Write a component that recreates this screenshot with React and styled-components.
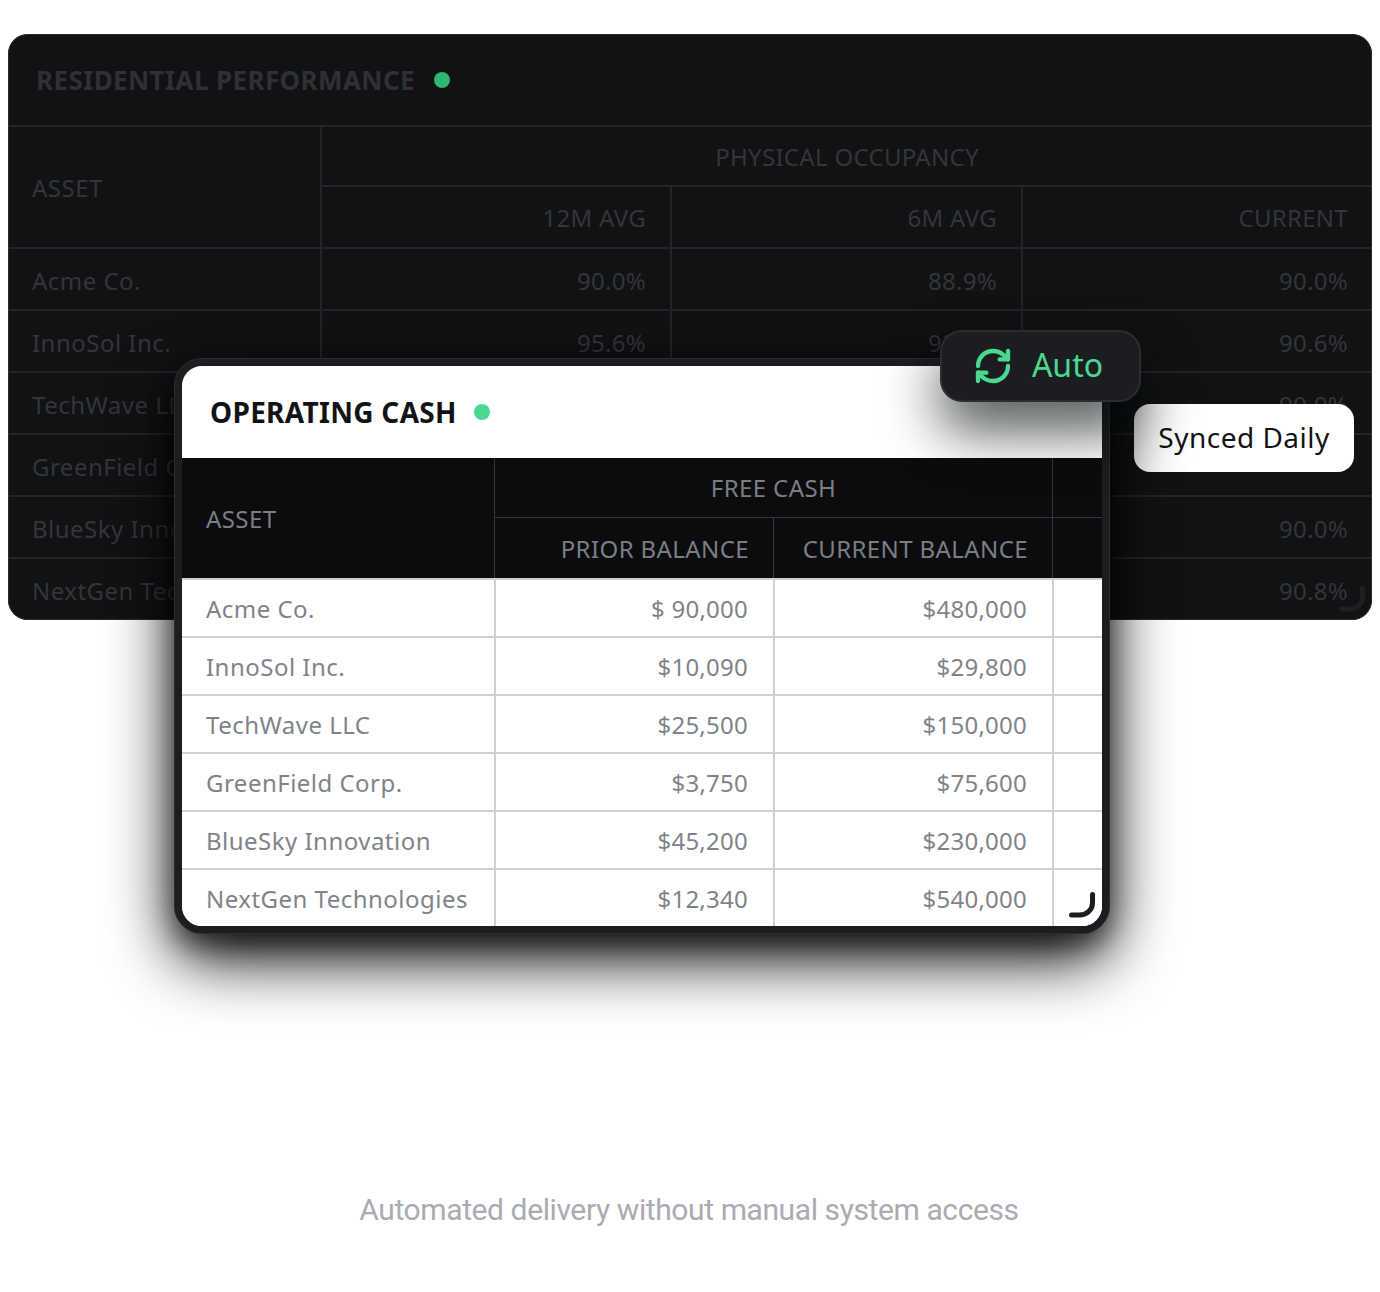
import React from "react";
import styled, { createGlobalStyle } from "styled-components";
import { RefreshCw } from "lucide-react";

const GlobalStyle = createGlobalStyle`
  body {
    margin: 0;
    background: #fff;
    font-family: "Noto Sans", sans-serif;
    letter-spacing: 0.48px;
  }
`;

const Stage = styled.div`
  position: relative;
  width: 1380px;
  height: 1292px;
  box-sizing: border-box;
  padding: 34px 8px 0;
  overflow: hidden;
`;

const BackCard = styled.section`
  width: 1364px;
  height: 586px;
  background: #111214;
  border-radius: 20px;
  outline: 1px solid #2a2b30;
  outline-offset: -1px;
  overflow: hidden;
  position: relative;
`;

const CardHeader = styled.div`
  height: ${(p) => p.$height}px;
  display: flex;
  align-items: center;
  gap: ${(p) => p.$gap}px;
  padding-left: ${(p) => p.$inset}px;
  box-sizing: border-box;
`;

const BackTitle = styled.h2`
  margin: 0;
  font-size: 26px;
  font-weight: 700;
  letter-spacing: 0.4px;
  color: #2f3035;
`;

const FrontTitle = styled.h2`
  margin: 0;
  font-size: 28px;
  font-weight: 700;
  letter-spacing: 0.3px;
  color: #121316;
`;

const Dot = styled.span`
  width: 16px;
  height: 16px;
  border-radius: 50%;
  background: ${(p) => p.$color};
`;

const Table = styled.table`
  table-layout: fixed;
  width: ${(p) => p.$width}px;
  border-collapse: separate;
  border-spacing: 0;
`;

const BackCell = styled.td`
  box-sizing: border-box;
  height: ${(p) => p.$height || 62}px;
  padding: ${(p) => (p.as === "th" ? "0 24px" : "2px 24px 0")};
  border-top: 2px solid #232428;
  border-left: ${(p) => (p.$first ? "none" : "2px solid #232428")};
  font-size: 24px;
  font-weight: 400;
  letter-spacing: ${(p) => (p.$align === "left" ? "0.48px" : "0.3px")};
  color: #33353a;
  text-align: ${(p) => p.$align || "right"};
`;

const FrontHeadCell = styled.th`
  box-sizing: border-box;
  height: ${(p) => p.$height}px;
  padding: 0 24px;
  background: #0b0c0e;
  border-top: ${(p) => (p.$top ? "1px solid #34363b" : "none")};
  border-left: ${(p) => (p.$first ? "none" : "1px solid #34363b")};
  font-size: 24px;
  font-weight: 400;
  letter-spacing: 0.4px;
  color: #7b7f85;
  text-align: ${(p) => p.$align || "right"};
`;

const FrontCell = styled.td`
  box-sizing: border-box;
  height: 58px;
  padding: 0 25px 0 24px;
  background: #fff;
  border-top: 2px solid #cfd1d4;
  border-left: ${(p) => (p.$first ? "none" : "2px solid #cfd1d4")};
  font-size: 24px;
  letter-spacing: ${(p) => (p.$align === "left" ? "0.48px" : "0.25px")};
  color: #7f8389;
  text-align: ${(p) => p.$align || "right"};
`;

const FrontCard = styled.section`
  position: absolute;
  left: 174px;
  top: 358px;
  width: 936px;
  height: 576px;
  box-sizing: border-box;
  border: 8px solid #1c1d20;
  outline: 1px solid #2c2d33;
  outline-offset: -1px;
  border-radius: 28px;
  background: #fff;
  overflow: hidden;
`;

const FrontShadow = styled.div`
  position: absolute;
  left: 174px;
  top: 358px;
  width: 936px;
  height: 576px;
  border-radius: 28px;
  box-shadow: 0 24px 64px #000, 0 12px 24px rgba(0, 0, 0, 0.4);
`;

const AutoPill = styled.div`
  position: absolute;
  left: 940px;
  top: 330px;
  width: 201px;
  height: 72px;
  box-sizing: border-box;
  padding: 0 0 3px 3px;
  display: flex;
  align-items: center;
  justify-content: center;
  gap: 19px;
  background: #1c1d20;
  border: 2px solid #2c2d33;
  border-radius: 22px;
  box-shadow: 0 28px 56px rgba(0, 8, 8, 0.7);
  font-size: 32px;
  letter-spacing: 0;
  color: #4ad991;
`;

const AutoIcon = styled(RefreshCw)`
  margin-top: 3px;
  margin-left: -8px;
`;

const SyncedPill = styled.div`
  position: absolute;
  left: 1134px;
  top: 404px;
  width: 220px;
  height: 68px;
  box-sizing: border-box;
  padding-bottom: 2px;
  display: flex;
  align-items: center;
  justify-content: center;
  background: #fff;
  border-radius: 16px;
  font-size: 28px;
  color: #121316;
`;

const Handle = styled.svg`
  position: absolute;
  right: ${(p) => p.$right}px;
  bottom: ${(p) => p.$bottom}px;
`;

const Caption = styled.p`
  position: absolute;
  left: 0;
  right: 2px;
  top: 1190px;
  margin: 0;
  text-align: center;
  font-family: Roboto, sans-serif;
  font-size: 30px;
  letter-spacing: -0.4px;
  line-height: 40px;
  color: #a9acb2;
`;

const occupancy = [
  ["Acme Co.", "90.0%", "88.9%", "90.0%"],
  ["InnoSol Inc.", "95.6%", "92.1%", "90.6%"],
  ["TechWave LLC", "91.2%", "90.4%", "90.0%"],
  ["GreenField Corp.", "88.4%", "89.7%", ""],
  ["BlueSky Innovation", "92.5%", "91.3%", "90.0%"],
  ["NextGen Technologies", "89.8%", "90.2%", "90.8%"],
];

const balances = [
  ["Acme Co.", "$ 90,000", "$480,000"],
  ["InnoSol Inc.", "$10,090", "$29,800"],
  ["TechWave LLC", "$25,500", "$150,000"],
  ["GreenField Corp.", "$3,750", "$75,600"],
  ["BlueSky Innovation", "$45,200", "$230,000"],
  ["NextGen Technologies", "$12,340", "$540,000"],
];

function ResizeHandle({ color, right, bottom }) {
  return (
    <Handle $right={right} $bottom={bottom} width="28" height="26" viewBox="0 0 28 26" fill="none">
      <path d="M2.5 23h8c7 0 13-5 13-12V2.5" stroke={color} strokeWidth="5" strokeLinecap="round" />
    </Handle>
  );
}

export default function App() {
  return (
    <Stage>
      <GlobalStyle />
      <BackCard>
        <CardHeader $height={91} $inset={28} $gap={19}>
          <BackTitle>RESIDENTIAL PERFORMANCE</BackTitle>
          <Dot $color="#2fb673" />
        </CardHeader>
        <Table $width={1364}>
          <colgroup>
            <col width="312" />
            <col width="350" />
            <col width="351" />
            <col width="351" />
          </colgroup>
          <tbody>
            <tr>
              <BackCell as="th" $first $align="left" rowSpan={2}>ASSET</BackCell>
              <BackCell as="th" $align="center" colSpan={3} $height={60}>PHYSICAL OCCUPANCY</BackCell>
            </tr>
            <tr>
              <BackCell as="th">12M AVG</BackCell>
              <BackCell as="th">6M AVG</BackCell>
              <BackCell as="th">CURRENT</BackCell>
            </tr>
            {occupancy.map((row) => (
              <tr key={row[0]}>
                <BackCell $first $align="left">{row[0]}</BackCell>
                <BackCell>{row[1]}</BackCell>
                <BackCell>{row[2]}</BackCell>
                <BackCell>{row[3]}</BackCell>
              </tr>
            ))}
          </tbody>
        </Table>
        <ResizeHandle color="#1e1f23" right={5} bottom={8} />
      </BackCard>

      <SyncedPill>Synced Daily</SyncedPill>
      <FrontShadow />

      <FrontCard>
        <CardHeader $height={92} $inset={28} $gap={17}>
          <FrontTitle>OPERATING CASH</FrontTitle>
          <Dot $color="#4ad991" />
        </CardHeader>
        <Table $width={920}>
          <colgroup>
            <col width="312" />
            <col width="279" />
            <col width="279" />
            <col width="50" />
          </colgroup>
          <tbody>
            <tr>
              <FrontHeadCell $first $align="left" rowSpan={2}>ASSET</FrontHeadCell>
              <FrontHeadCell $align="center" colSpan={2} $height={59}>FREE CASH</FrontHeadCell>
              <FrontHeadCell $height={59} />
            </tr>
            <tr>
              <FrontHeadCell $top $height={61}>PRIOR BALANCE</FrontHeadCell>
              <FrontHeadCell $top $height={61}>CURRENT BALANCE</FrontHeadCell>
              <FrontHeadCell $top $height={61} />
            </tr>
            {balances.map((row) => (
              <tr key={row[0]}>
                <FrontCell $first $align="left">{row[0]}</FrontCell>
                <FrontCell>{row[1]}</FrontCell>
                <FrontCell>{row[2]}</FrontCell>
                <FrontCell />
              </tr>
            ))}
          </tbody>
        </Table>
        <ResizeHandle color="#1c1d20" right={5} bottom={8} />
      </FrontCard>

      <AutoPill>
        <AutoIcon size={40} strokeWidth={2.6} />
        <span>Auto</span>
      </AutoPill>

      <Caption>Automated delivery without manual system access</Caption>
    </Stage>
  );
}
